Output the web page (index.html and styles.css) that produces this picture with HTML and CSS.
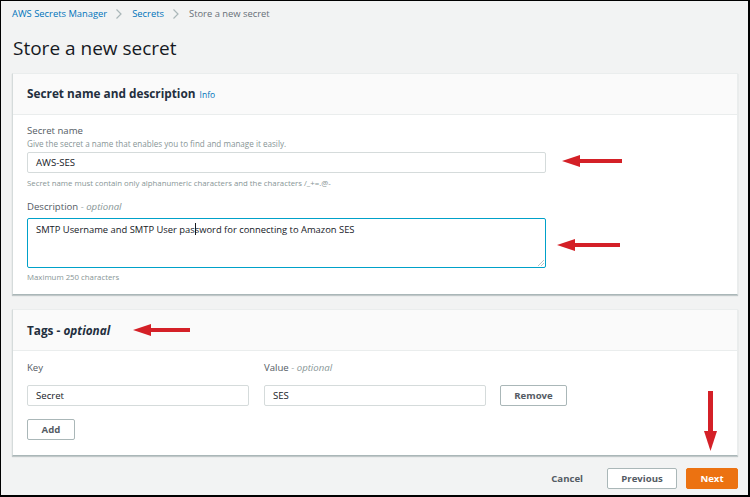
FILE: index.html
```html
<!DOCTYPE html>
<html lang="en">
<head>
<meta charset="utf-8">
<title>Store a new secret</title>
<link rel="stylesheet" href="styles.css">
</head>
<body>
<div class="frame">
  <nav class="crumbs">
    <a class="crumb-link">AWS Secrets Manager</a>
    <svg class="chev" width="6" height="10" viewBox="0 0 6 10"><polyline points="0.5,0.5 5,5 0.5,9.5" fill="none" stroke="#aab7b8" stroke-width="1.2"/></svg>
    <a class="crumb-link">Secrets</a>
    <svg class="chev" width="6" height="10" viewBox="0 0 6 10"><polyline points="0.5,0.5 5,5 0.5,9.5" fill="none" stroke="#aab7b8" stroke-width="1.2"/></svg>
    <span class="crumb-current">Store a new secret</span>
  </nav>

  <h1 class="page-title">Store a new secret</h1>

  <section class="card card-first">
    <header class="card-head">
      <h2 class="card-title">Secret name and description <span class="info">Info</span></h2>
    </header>
    <div class="card-body">
      <div class="label">Secret name</div>
      <div class="hint">Give the secret a name that enables you to find and manage it easily.</div>
      <div class="input input-wide">AWS-SES</div>
      <div class="help">Secret name must contain only alphanumeric characters and the characters /_+=.@-</div>
      <div class="label label-gap">Description <i class="opt">- optional</i></div>
      <div class="textarea">SMTP Username and SMTP User pas<span class="caret"></span>sword for connecting to Amazon SES
        <svg class="grip" width="7" height="7" viewBox="0 0 7 7"><line x1="1" y1="7" x2="7" y2="1" stroke="#aab7b8" stroke-width="0.8"/><line x1="4" y1="7" x2="7" y2="4" stroke="#aab7b8" stroke-width="0.8"/></svg>
      </div>
      <div class="help help-max">Maximum 250 characters</div>
    </div>
  </section>

  <section class="card card-second">
    <header class="card-head">
      <h2 class="card-title">Tags <span class="dash">-</span> <i>optional</i></h2>
    </header>
    <div class="card-body tags-body">
      <div class="tag-grid">
        <div class="label">Key</div>
        <div class="label">Value <i class="opt">- optional</i></div>
        <div></div>
        <div class="input input-tag">Secret</div>
        <div class="input input-tag">SES</div>
        <div class="cell"><button class="btn btn-remove">Remove</button></div>
      </div>
      <button class="btn btn-add">Add</button>
    </div>
  </section>

  <footer class="actions">
    <button class="btn-link">Cancel</button>
    <button class="btn btn-prev">Previous</button>
    <button class="btn btn-next">Next</button>
  </footer>

  <svg class="arrow arrow-1" width="60" height="12" viewBox="0 0 60 12"><polygon points="0,6 18,0 18,12" fill="#d42027"/><rect x="17" y="4" width="43" height="4" fill="#d42027"/></svg>
  <svg class="arrow arrow-2" width="63" height="12" viewBox="0 0 63 12"><polygon points="0,6 18,0 18,12" fill="#d42027"/><rect x="17" y="4" width="46" height="4" fill="#d42027"/></svg>
  <svg class="arrow arrow-3" width="57" height="12" viewBox="0 0 57 12"><polygon points="0,6 18,0 18,12" fill="#d42027"/><rect x="17" y="4" width="40" height="4" fill="#d42027"/></svg>
  <svg class="arrow arrow-4" width="13" height="60" viewBox="0 0 13 60"><rect x="4" y="0" width="5" height="41" fill="#d42027"/><polygon points="0,40 13,40 6.5,60" fill="#d42027"/></svg>
</div>
</body>
</html>
```

FILE: styles.css
```css
* { box-sizing: border-box; }
html, body { margin: 0; padding: 0; }
body {
  width: 750px;
  height: 497px;
  font-family: "Open Sans", "Liberation Sans", sans-serif;
  color: #16191f;
  overflow: hidden;
}
.frame {
  position: relative;
  width: 750px;
  height: 497px;
  background: #f2f3f3;
  border-style: solid;
  border-color: #000;
  border-width: 1px 2px 2px 1px;
  padding: 0 10px 0 11px;
}
.crumbs {
  display: flex;
  align-items: center;
  height: 26px;
  font-size: 9.4px;
  line-height: 14px;
}
.crumb-link { color: #0073bb; }
.crumb-current { color: #687078; }
.chev { margin: 0 10px 0 9px; }
.page-title {
  margin: 8px 0 0 1px;
  font-size: 19px;
  font-weight: 400;
  line-height: 26px;
  color: #16191f;
}
.card {
  background: #fff;
  border: 1px solid #eaeded;
  border-bottom-color: #aab7b8;
  border-left-color: #d5dbdb;
  box-shadow: 0 1px 1px rgba(0, 28, 36, 0.2);
}
.card-first { margin-top: 12px; }
.card-second { margin-top: 14px; }
.card-head {
  height: 41px;
  background: #fafafa;
  border-bottom: 1px solid #eaeded;
  display: flex;
  align-items: center;
  padding-left: 14px;
}
.card-title {
  margin: 0;
  font-size: 11.8px;
  font-weight: 700;
  color: #232f3e;
  line-height: 18px;
}
.info {
  font-size: 8.5px;
  font-weight: 400;
  color: #0073bb;
  margin-left: 1px;
}
.card-body {
  padding: 9px 14px 11px 14px;
}
.label {
  font-size: 9.6px;
  line-height: 14px;
  color: #545b64;
}
.label-gap { margin-top: 11px; }
.opt { color: #879596; }
.hint {
  font-size: 8.1px;
  line-height: 11px;
  color: #879596;
}
.input {
  height: 21px;
  border: 1px solid #d5dbdb;
  border-radius: 2px;
  padding: 0 8px;
  font-size: 9.6px;
  line-height: 19px;
  color: #16191f;
  background: #fff;
}
.input-wide { width: 519px; margin-top: 3px; }
.help {
  margin-top: 4px;
  font-size: 7.8px;
  line-height: 12px;
  color: #879596;
}
.help-max { margin-top: 3px; }
.textarea {
  position: relative;
  width: 519px;
  height: 50px;
  margin-top: 4px;
  border: 1px solid #00a1c9;
  border-radius: 2px;
  padding: 4px 8px;
  font-size: 9.4px;
  line-height: 14px;
  color: #16191f;
}
.caret {
  display: inline-block;
  width: 1px;
  height: 12px;
  background: #16191f;
  vertical-align: -2px;
  margin-right: -1px;
}
.grip { position: absolute; right: 1px; bottom: 1px; }
.tags-body { padding: 10px 14px 15px 14px; }
.tag-grid {
  display: grid;
  grid-template-columns: 222px 222px 67px;
  column-gap: 15px;
  row-gap: 10px;
}
.tag-grid .input { width: 222px; }
.cell { display: flex; }
.btn {
  font-family: "Open Sans", "Liberation Sans", sans-serif;
  display: block;
  height: 21px;
  border: 1px solid #aab7b8;
  border-radius: 2px;
  background: #fff;
  color: #545b64;
  font-size: 9.6px;
  font-weight: 700;
  padding: 0;
  line-height: 19px;
}
.btn-remove { width: 67px; margin-left: -1px; }
.btn-add { width: 48px; margin-top: 13px; }
.actions {
  display: flex;
  justify-content: flex-end;
  align-items: center;
  margin-top: 12px;
}
.btn-link {
  font-family: "Open Sans", "Liberation Sans", sans-serif;
  border: none;
  background: none;
  color: #545b64;
  font-size: 9.6px;
  font-weight: 700;
  padding: 0;
  margin-right: 24px;
}
.btn-prev { width: 70px; }
.btn-next {
  width: 52px;
  margin-left: 9px;
  background: #ec7211;
  border-color: #ec7211;
  color: #fff;
}
.arrow { position: absolute; display: block; }
.arrow-1 { left: 561px; top: 154px; }
.arrow-2 { left: 556px; top: 238px; }
.arrow-3 { left: 132px; top: 323px; }
.arrow-4 { left: 703px; top: 390px; }
```
